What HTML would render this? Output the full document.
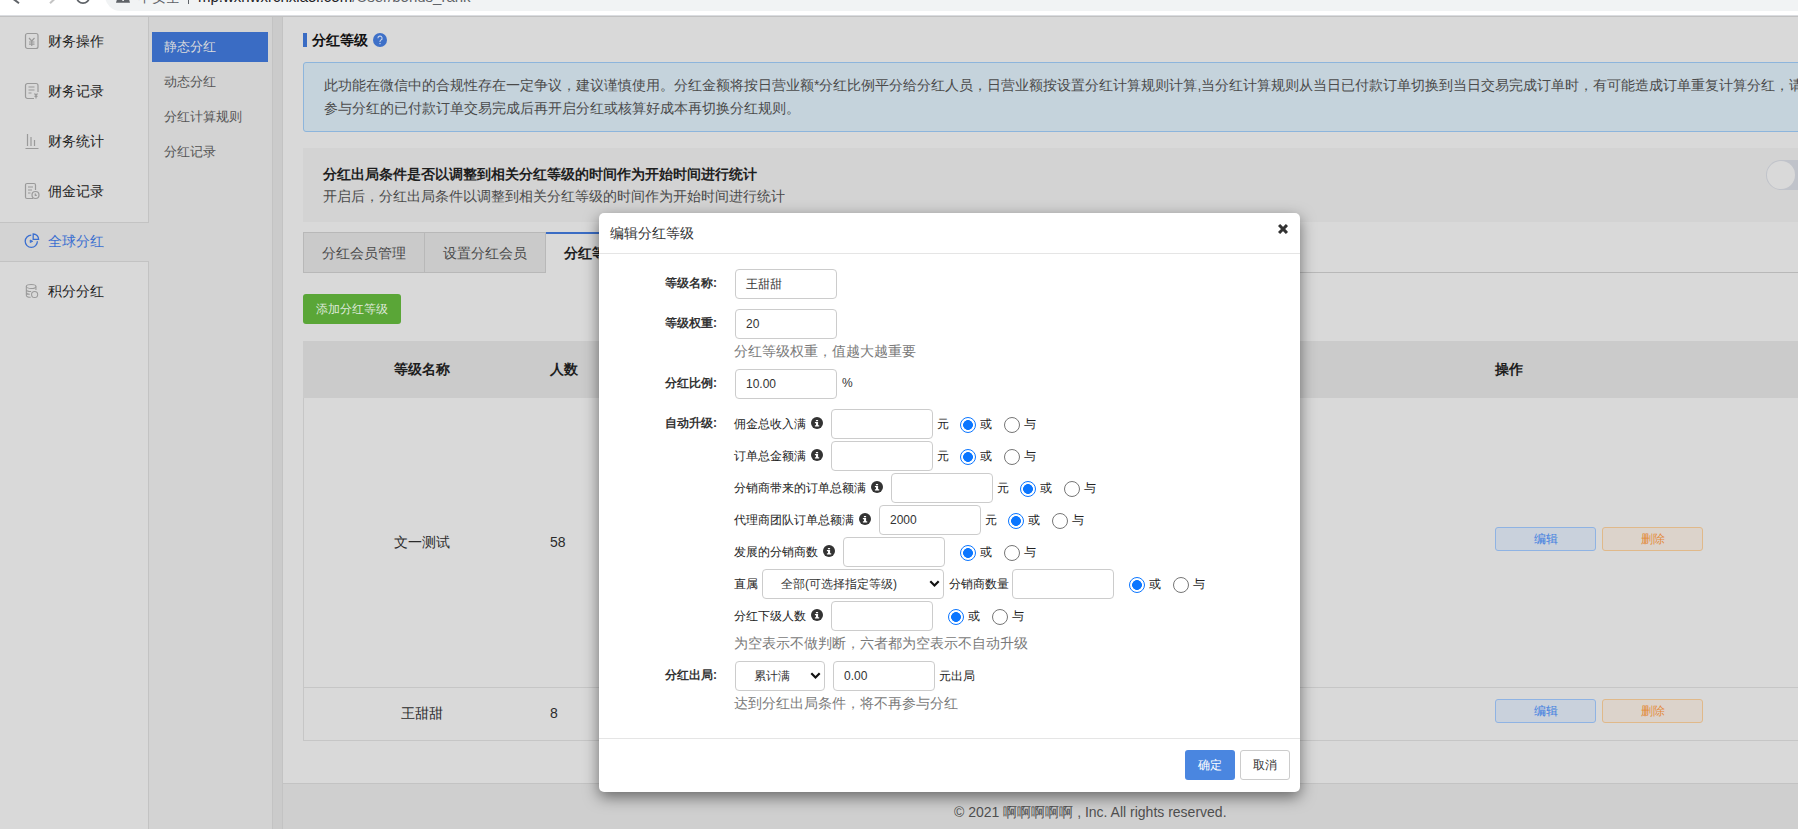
<!DOCTYPE html>
<html><head><meta charset="utf-8">
<style>
*{box-sizing:border-box;margin:0;padding:0}
html,body{width:1798px;height:829px;overflow:hidden;background:#d9d9d9;font-family:"Liberation Sans",sans-serif;color:#2b2b2b}
.a{position:absolute}
.t{white-space:nowrap;line-height:1}
/* browser */
#chrome{left:0;top:0;width:1798px;height:16px;background:#fff}
#chrome .line{left:0;top:16px;width:1798px;height:1px;background:#c4c4c4}
#pill{left:105px;top:-20px;width:1720px;height:31px;background:#f1f3f4;border-radius:16px}
/* sidebar */
#side{left:0;top:17px;width:149px;height:812px;background:#d9d9d9;border-right:1px solid #c3c3c3}
.si{left:0;width:148px;height:40px}
.si .lb{left:48px;top:13px;font-size:14px;color:#2b2b2b}
#col2{left:149px;top:17px;width:124px;height:812px;background:#d3d3d3;border-right:1px solid #c3c3c3}
#strip{left:273px;top:17px;width:10px;height:812px;background:#cbcbcb;border-right:1px solid #c3c3c3}
#main{left:283px;top:17px;width:1515px;height:767px;background:#d9d9d9;border-bottom:1px solid #c3c3c3}
#below{left:283px;top:784px;width:1515px;height:45px;background:#cfcfcf}
.c2i{left:3px;width:116px;height:30px;font-size:13px;color:#555}
.c2i span{position:absolute;left:12px;top:8px;line-height:1;white-space:nowrap}

.btn-e,.btn-d{width:101px;height:24px;border-radius:3px;font-size:12px;line-height:22px;text-align:center}
.btn-e{left:1495px;background:#c9d1dc;border:1px solid #8fb3e3;color:#3d7ee0}
.btn-d{left:1602px;background:#dcd3cb;border:1px solid #e0b98a;color:#e38b3c}
#modal{left:599px;top:212px;width:701px;height:580px}
#modal .bg{position:absolute;left:0;top:1px;width:701px;height:579px;background:#fff;border-radius:5px;box-shadow:0 5px 15px rgba(0,0,0,.5)}
#modal .lbl{position:absolute;right:583px;margin-top:1.5px;font-size:12px;font-weight:bold;color:#333;line-height:1;white-space:nowrap}
#modal .sub{position:absolute;left:135px;margin-top:1px;font-size:12px;color:#222;line-height:1;white-space:nowrap}
#modal .hlp{position:absolute;font-size:14px;color:#7a7a7a;line-height:1;white-space:nowrap}
#modal .inp{position:absolute;width:102px;height:30px;border:1px solid #ccc;border-radius:4px;font-size:12px;color:#333;line-height:28px;padding-left:10px;white-space:nowrap}
#modal .sel{position:absolute;height:30px;border:1px solid #ccc;border-radius:4px;font-size:12px;color:#333;line-height:28px;padding-left:18px;white-space:nowrap}
#modal .sel svg{position:absolute;right:3.5px;top:10px}
#modal .rd{position:absolute;width:16px;height:16px;border-radius:50%;border:1px solid #767676;margin-top:0;margin-left:1px}
#modal .rd.on{border:1.5px solid #0b76ff;background:radial-gradient(circle,#0b76ff 0 4.6px,#fff 5.2px)}
#modal .ic{position:absolute;width:12px;height:12px}
</style></head>
<body>
<div id="chrome" class="a">
  <div id="pill" class="a"></div>
  <svg class="a" style="left:0;top:0" width="140" height="15" viewBox="0 0 140 15">
    <path d="M10 -3.5L19 3.2" stroke="#5f6368" stroke-width="2" fill="none"/>
    <path d="M50 3.2L59 -5" stroke="#c4c4c4" stroke-width="2" fill="none"/>
    <circle cx="83" cy="-3" r="6.2" stroke="#5f6368" stroke-width="1.8" fill="none"/>
    <path d="M116 2.8L118 -4h10l2 6.8z" fill="#5f6368"/>
    <rect x="122.3" y="-3" width="1.6" height="4" fill="#f1f3f4"/>
  </svg>
  <div class="a t" style="left:138px;top:-10px;font-size:14px;color:#5f6368">不安全</div>
  <div class="a" style="left:188px;top:-4px;width:1px;height:8px;background:#5f6368"></div>
  <div class="a t" id="url" style="left:198px;top:-11px;font-size:15px;color:#202124">mp.wxnwxrcnxiaoi.com<span style="color:#5f6368">/User/bonus_rank</span></div>
  <div class="a" style="left:0;top:15px;width:1798px;height:1px;background:#dadce0"></div>
  <div class="a" style="left:0;top:16px;width:1798px;height:1px;background:#c1c1c1"></div>
</div>
<div id="side" class="a"></div>
<div id="col2" class="a"></div>
<div id="strip" class="a"></div>
<div id="main" class="a"></div>
<div id="below" class="a"></div>

<!-- sidebar items -->
<div class="a" style="left:0;top:222px;width:149px;height:40px;background:#d3d3d3;border-top:1px solid #c3c3c3;border-bottom:1px solid #c3c3c3"></div>

<div class="a t" style="left:48px;top:34px;font-size:14px;color:#222">财务操作</div>
<div class="a t" style="left:48px;top:84px;font-size:14px;color:#222">财务记录</div>
<div class="a t" style="left:48px;top:134px;font-size:14px;color:#222">财务统计</div>
<div class="a t" style="left:48px;top:184px;font-size:14px;color:#222">佣金记录</div>
<div class="a t" style="left:48px;top:234px;font-size:14px;color:#3b6fd0">全球分红</div>
<div class="a t" style="left:48px;top:284px;font-size:14px;color:#222">积分分红</div>

<!-- icons -->
<svg class="a" style="left:24px;top:32px" width="16" height="18" viewBox="0 0 16 18" fill="none" stroke="#9a9a9a" stroke-width="1.2">
  <rect x="1.5" y="1.5" width="12.5" height="15" rx="2"/>
  <path d="M5 6l2.75 3 2.75-3M7.75 9v5M5 10h5.5M5 12.2h5.5"/>
</svg>
<svg class="a" style="left:24px;top:82px" width="16" height="18" viewBox="0 0 16 18" fill="none" stroke="#9a9a9a" stroke-width="1.2">
  <path d="M10 16.5H3.5a2 2 0 0 1-2-2v-11a2 2 0 0 1 2-2h8.5a2 2 0 0 1 2 2V10"/>
  <path d="M4.5 5h6M4.5 8h6M4.5 11h3M10.5 11.5l1.5 1.8 1.5-1.8M12 13.3v3.2M10.5 14.3h3"/>
</svg>
<svg class="a" style="left:24px;top:132px" width="16" height="18" viewBox="0 0 16 18" fill="none" stroke="#9a9a9a" stroke-width="1.2">
  <path d="M1.5 16.5h13M3.5 2v12M7 5v9M10.5 8v6"/>
</svg>
<svg class="a" style="left:24px;top:182px" width="16" height="18" viewBox="0 0 16 18" fill="none" stroke="#9a9a9a" stroke-width="1.2">
  <path d="M9 16.5H3a1.5 1.5 0 0 1-1.5-1.5V3A1.5 1.5 0 0 1 3 1.5h7A1.5 1.5 0 0 1 11.5 3v5"/>
  <path d="M4 5h5M4 8h4M4 11h2.5"/>
  <circle cx="11.5" cy="13" r="3.5"/><path d="M11.3 11.5v1.8h1.5"/>
</svg>
<svg class="a" style="left:24px;top:233px" width="16" height="16" viewBox="0 0 16 16" fill="none" stroke="#3b6fd0" stroke-width="1.3">
  <path d="M7.3 2.2A6.1 6.1 0 1 0 13.4 8.3"/>
  <path d="M9.2 1v5.4h5.4A5.4 5.4 0 0 0 9.2 1z"/>
  <path d="M6.2 7l2.6 1.3-2.6 1.3z" fill="#3b6fd0" stroke-width=".8"/>
</svg>
<svg class="a" style="left:25px;top:283px" width="14" height="16" viewBox="0 0 16 18" fill="none" stroke="#9a9a9a" stroke-width="1.2">
  <ellipse cx="7" cy="3.8" rx="5.5" ry="2.3"/>
  <path d="M1.5 3.8v10c0 1.3 2.4 2.3 5 2.3M12.5 3.8v4M1.5 7.2c0 1.3 2.4 2.3 5.5 2.3M1.5 10.5c0 1.3 2 2.3 4 2.3"/>
  <circle cx="11" cy="13" r="3.5"/>
</svg>

<!-- col2 -->
<div class="a" style="left:152px;top:32px;width:116px;height:30px;background:#3a6cc4"></div>
<div class="a t" style="left:164px;top:40px;font-size:13px;color:#dcdcdc">静态分红</div>
<div class="a t" style="left:164px;top:75px;font-size:13px;color:#555">动态分红</div>
<div class="a t" style="left:164px;top:110px;font-size:13px;color:#555">分红计算规则</div>
<div class="a t" style="left:164px;top:145px;font-size:13px;color:#555">分红记录</div>

<!-- title -->
<div class="a" style="left:303px;top:33px;width:4px;height:14px;background:#3a6cc4"></div>
<div class="a t" style="left:312px;top:33px;font-size:14px;font-weight:bold;color:#111">分红等级</div>
<svg class="a" style="left:373px;top:33px" width="14" height="14" viewBox="0 0 14 14"><circle cx="7" cy="7" r="7" fill="#3e70c8"/><path d="M4.9 5.2A2.1 2.1 0 1 1 7.9 7.1C7.3 7.5 7 7.8 7 8.6V9" stroke="#c8d3e8" stroke-width="1.1" fill="none"/><rect x="6.4" y="10" width="1.2" height="1.2" fill="#c8d3e8"/></svg>

<!-- info box -->
<div class="a" style="left:303px;top:62px;width:1510px;height:70px;background:#c5d3dc;border:1px solid #8db5dc;border-radius:3px"></div>
<div class="a t" style="left:324px;top:78px;font-size:14px;color:#4a4a4a">此功能在微信中的合规性存在一定争议，建议谨慎使用。分红金额将按日营业额*分红比例平分给分红人员，日营业额按设置分红计算规则计算,当分红计算规则从当日已付款订单切换到当日交易完成订单时，有可能造成订单重复计算分红，请等待</div>
<div class="a t" style="left:324px;top:101px;font-size:14px;color:#4a4a4a">参与分红的已付款订单交易完成后再开启分红或核算好成本再切换分红规则。</div>

<!-- settings box -->
<div class="a" style="left:303px;top:148px;width:1500px;height:74px;background:#d3d3d3"></div>
<div class="a t" style="left:323px;top:167px;font-size:14px;font-weight:bold;color:#1e1e1e">分红出局条件是否以调整到相关分红等级的时间作为开始时间进行统计</div>
<div class="a t" style="left:323px;top:189px;font-size:14px;color:#4a4a4a">开启后，分红出局条件以调整到相关分红等级的时间作为开始时间进行统计</div>
<div class="a" style="left:1766px;top:160px;width:60px;height:30px;border-radius:15px;background:#c0c3ca"></div>
<div class="a" style="left:1767px;top:161px;width:28px;height:28px;border-radius:50%;background:#d9d9d9"></div>

<!-- tabs -->
<div class="a" style="left:303px;top:272px;width:1500px;height:1px;background:#b8b8b8"></div>
<div class="a" style="left:303px;top:232px;width:122px;height:41px;background:#cacaca;border:1px solid #b8b8b8"></div>
<div class="a" style="left:424px;top:232px;width:122px;height:41px;background:#cacaca;border:1px solid #b8b8b8"></div>
<div class="a" style="left:546px;top:232px;width:120px;height:41px;background:#d9d9d9;border-top:2px solid #3a6cc4"></div>
<div class="a t" style="left:322px;top:246px;font-size:14px;color:#4a4a4a">分红会员管理</div>
<div class="a t" style="left:443px;top:246px;font-size:14px;color:#4a4a4a">设置分红会员</div>
<div class="a t" style="left:564px;top:246px;font-size:14px;font-weight:bold;color:#1e1e1e">分红等级</div>

<!-- green btn -->
<div class="a" style="left:303px;top:294px;width:98px;height:30px;background:#5aa637;border-radius:3px"></div>
<div class="a t" style="left:316px;top:303px;font-size:12px;color:#dfe9da">添加分红等级</div>

<!-- table -->
<div class="a" style="left:303px;top:341px;width:1500px;height:400px;border:1px solid #c6c6c6;background:#d9d9d9"></div>
<div class="a" style="left:303px;top:341px;width:1500px;height:57px;background:#cbcbcb"></div>
<div class="a" style="left:304px;top:687px;width:1500px;height:1px;background:#c6c6c6"></div>
<div class="a t" style="left:394px;top:362px;font-size:14px;font-weight:bold;color:#1e1e1e">等级名称</div>
<div class="a t" style="left:550px;top:362px;font-size:14px;font-weight:bold;color:#1e1e1e">人数</div>
<div class="a t" style="left:1495px;top:362px;font-size:14px;font-weight:bold;color:#1e1e1e">操作</div>
<div class="a t" style="left:394px;top:535px;font-size:14px;color:#2b2b2b">文一测试</div>
<div class="a t" style="left:550px;top:535px;font-size:14px;color:#2b2b2b">58</div>
<div class="a t" style="left:401px;top:706px;font-size:14px;color:#2b2b2b">王甜甜</div>
<div class="a t" style="left:550px;top:706px;font-size:14px;color:#2b2b2b">8</div>

<div class="a btn-e" style="top:527px">编辑</div>
<div class="a btn-d" style="top:527px">删除</div>
<div class="a btn-e" style="top:699px">编辑</div>
<div class="a btn-d" style="top:699px">删除</div>

<!-- footer -->
<div class="a t" style="left:954px;top:805px;font-size:14px;color:#4f4f4f">© 2021 啊啊啊啊啊 , Inc. All rights reserved.</div>
<div id="modal" class="a"><div class="bg"></div>
  <div class="a t" style="left:11px;top:14px;font-size:14px;color:#333">编辑分红等级</div>
  <svg class="a" style="left:679px;top:12px" width="10" height="10" viewBox="0 0 10 10"><path d="M2.1 2.1L7.9 7.9M7.9 2.1L2.1 7.9" stroke="#333" stroke-width="3" stroke-linecap="square"/></svg>
  <div class="a" style="left:0;top:41px;width:701px;height:1px;background:#e5e5e5"></div>

  <div class="lbl" style="top:63px">等级名称:</div>
  <div class="inp" style="left:136px;top:57px">王甜甜</div>
  <div class="lbl" style="top:103px">等级权重:</div>
  <div class="inp" style="left:136px;top:97px">20</div>
  <div class="hlp" style="left:135px;top:132px">分红等级权重，值越大越重要</div>
  <div class="lbl" style="top:163px">分红比例:</div>
  <div class="inp" style="left:136px;top:157px">10.00</div>
  <div class="a t" style="left:243px;top:165px;font-size:12px;color:#333">%</div>

  <div class="lbl" style="top:203px">自动升级:</div>

  <div class="sub" style="top:205px">佣金总收入满</div><svg class="ic" style="left:212px;top:205px" width="12" height="12" viewBox="0 0 12 12"><circle cx="6" cy="6" r="6" fill="#333"/><path d="M4.9 3h2.2v1.2H4.9z M3.9 5.1h3.2v3.2h1.1v1.1H3.9V8.3h1.1V6.2H3.9z" fill="#fff"/></svg>
  <div class="inp" style="left:232px;top:197px"></div>
  <div class="sub" style="left:338px;top:205px">元</div>
  <div class="rd on" style="left:360px;top:205px"></div><div class="sub" style="left:381px;top:205px">或</div>
  <div class="rd" style="left:404px;top:205px"></div><div class="sub" style="left:425px;top:205px">与</div>

  <div class="sub" style="top:237px">订单总金额满</div><svg class="ic" style="left:212px;top:237px" width="12" height="12" viewBox="0 0 12 12"><circle cx="6" cy="6" r="6" fill="#333"/><path d="M4.9 3h2.2v1.2H4.9z M3.9 5.1h3.2v3.2h1.1v1.1H3.9V8.3h1.1V6.2H3.9z" fill="#fff"/></svg>
  <div class="inp" style="left:232px;top:229px"></div>
  <div class="sub" style="left:338px;top:237px">元</div>
  <div class="rd on" style="left:360px;top:237px"></div><div class="sub" style="left:381px;top:237px">或</div>
  <div class="rd" style="left:404px;top:237px"></div><div class="sub" style="left:425px;top:237px">与</div>

  <div class="sub" style="top:269px">分销商带来的订单总额满</div><svg class="ic" style="left:272px;top:269px" width="12" height="12" viewBox="0 0 12 12"><circle cx="6" cy="6" r="6" fill="#333"/><path d="M4.9 3h2.2v1.2H4.9z M3.9 5.1h3.2v3.2h1.1v1.1H3.9V8.3h1.1V6.2H3.9z" fill="#fff"/></svg>
  <div class="inp" style="left:292px;top:261px"></div>
  <div class="sub" style="left:398px;top:269px">元</div>
  <div class="rd on" style="left:420px;top:269px"></div><div class="sub" style="left:441px;top:269px">或</div>
  <div class="rd" style="left:464px;top:269px"></div><div class="sub" style="left:485px;top:269px">与</div>

  <div class="sub" style="top:301px">代理商团队订单总额满</div><svg class="ic" style="left:260px;top:301px" width="12" height="12" viewBox="0 0 12 12"><circle cx="6" cy="6" r="6" fill="#333"/><path d="M4.9 3h2.2v1.2H4.9z M3.9 5.1h3.2v3.2h1.1v1.1H3.9V8.3h1.1V6.2H3.9z" fill="#fff"/></svg>
  <div class="inp" style="left:280px;top:293px">2000</div>
  <div class="sub" style="left:386px;top:301px">元</div>
  <div class="rd on" style="left:408px;top:301px"></div><div class="sub" style="left:429px;top:301px">或</div>
  <div class="rd" style="left:452px;top:301px"></div><div class="sub" style="left:473px;top:301px">与</div>

  <div class="sub" style="top:333px">发展的分销商数</div><svg class="ic" style="left:224px;top:333px" width="12" height="12" viewBox="0 0 12 12"><circle cx="6" cy="6" r="6" fill="#333"/><path d="M4.9 3h2.2v1.2H4.9z M3.9 5.1h3.2v3.2h1.1v1.1H3.9V8.3h1.1V6.2H3.9z" fill="#fff"/></svg>
  <div class="inp" style="left:244px;top:325px"></div>
  <div class="rd on" style="left:360px;top:333px"></div><div class="sub" style="left:381px;top:333px">或</div>
  <div class="rd" style="left:404px;top:333px"></div><div class="sub" style="left:425px;top:333px">与</div>

  <div class="sub" style="top:365px">直属</div>
  <div class="sel" style="left:163px;top:357px;width:182px">全部(可选择指定等级)<svg width="11" height="8" viewBox="0 0 11 8"><path d="M1.3 1.3L5.5 5.5L9.7 1.3" stroke="#111" stroke-width="2.2" fill="none"/></svg></div>
  <div class="sub" style="left:350px;top:365px">分销商数量</div>
  <div class="inp" style="left:413px;top:357px"></div>
  <div class="rd on" style="left:529px;top:365px"></div><div class="sub" style="left:550px;top:365px">或</div>
  <div class="rd" style="left:573px;top:365px"></div><div class="sub" style="left:594px;top:365px">与</div>

  <div class="sub" style="top:397px">分红下级人数</div><svg class="ic" style="left:212px;top:397px" width="12" height="12" viewBox="0 0 12 12"><circle cx="6" cy="6" r="6" fill="#333"/><path d="M4.9 3h2.2v1.2H4.9z M3.9 5.1h3.2v3.2h1.1v1.1H3.9V8.3h1.1V6.2H3.9z" fill="#fff"/></svg>
  <div class="inp" style="left:232px;top:389px"></div>
  <div class="rd on" style="left:348px;top:397px"></div><div class="sub" style="left:369px;top:397px">或</div>
  <div class="rd" style="left:392px;top:397px"></div><div class="sub" style="left:413px;top:397px">与</div>

  <div class="hlp" style="left:135px;top:424px">为空表示不做判断，六者都为空表示不自动升级</div>

  <div class="lbl" style="top:455px">分红出局:</div>
  <div class="sel" style="left:136px;top:449px;width:90px">累计满<svg width="11" height="8" viewBox="0 0 11 8"><path d="M1.3 1.3L5.5 5.5L9.7 1.3" stroke="#111" stroke-width="2.2" fill="none"/></svg></div>
  <div class="inp" style="left:234px;top:449px">0.00</div>
  <div class="sub" style="left:340px;top:457px">元出局</div>
  <div class="hlp" style="left:135px;top:484px">达到分红出局条件，将不再参与分红</div>

  <div class="a" style="left:0;top:526px;width:701px;height:1px;background:#e5e5e5"></div>
  <div class="a" style="left:586px;top:538px;width:50px;height:30px;background:#4a86e0;border-radius:3px;color:#fff;font-size:12px;line-height:30px;text-align:center">确定</div>
  <div class="a" style="left:641px;top:538px;width:50px;height:30px;background:#fff;border:1px solid #ccc;border-radius:3px;color:#333;font-size:12px;line-height:28px;text-align:center">取消</div>
</div>
</body></html>
